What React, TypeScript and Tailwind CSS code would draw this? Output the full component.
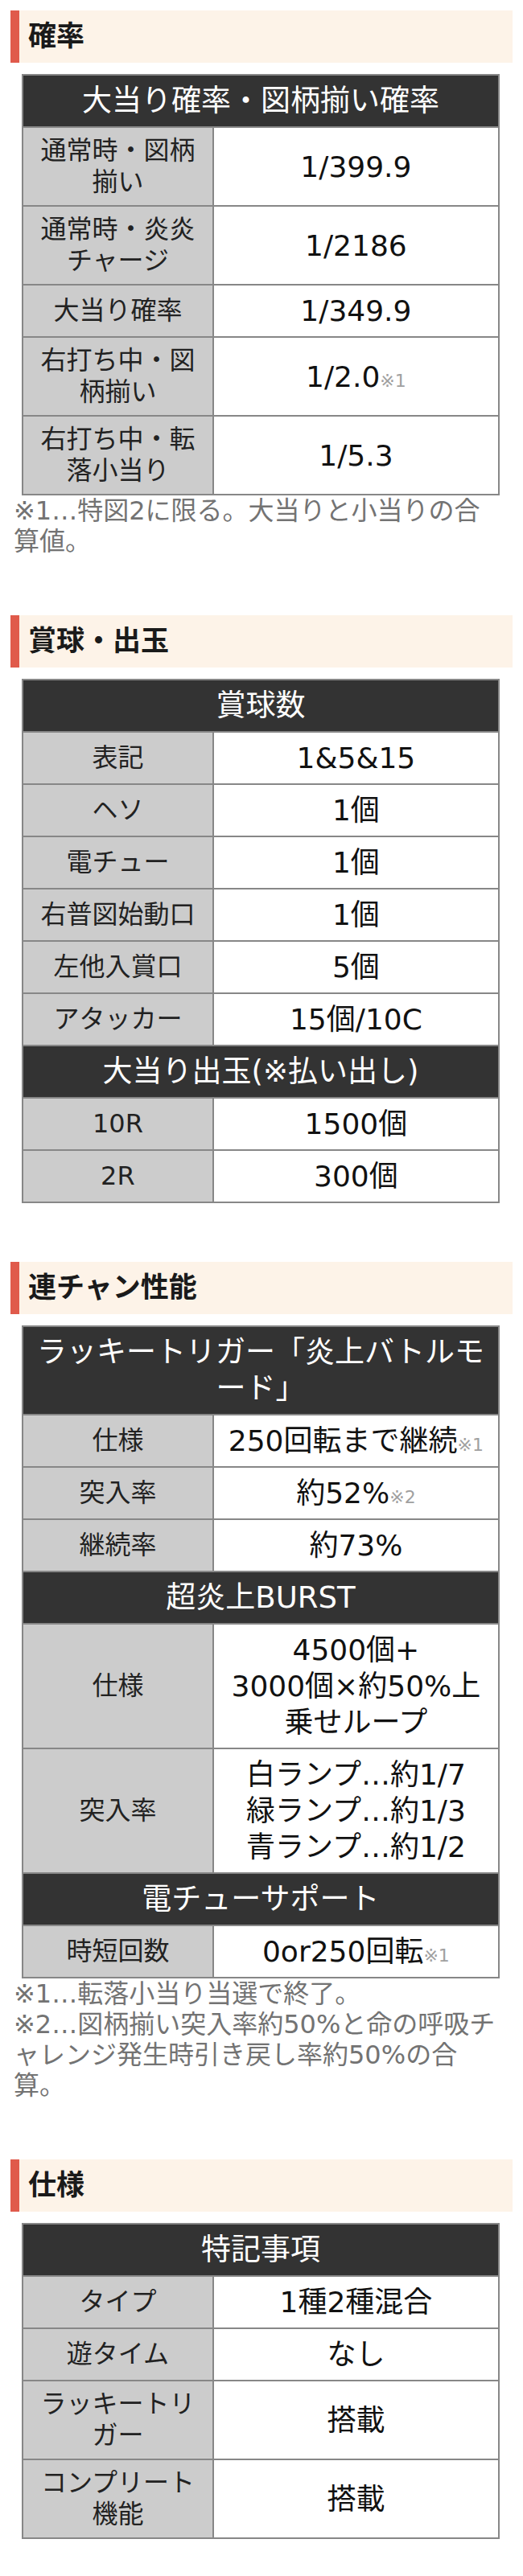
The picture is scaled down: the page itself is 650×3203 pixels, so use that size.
import type { ReactNode } from "react";

type Row =
    | { th: ReactNode }
    | { label: ReactNode; value: ReactNode };

type Section = {
    title: string;
    rows: Row[];
    notes?: ReactNode;
};

function Mark({ n }: { n: string }) {
    return <span className="text-[22px] leading-none text-[#a0a0a0]">※{n}</span>;
}

const sections: Section[] = [
    {
        title: "確率",
        rows: [
            { th: "大当り確率・図柄揃い確率" },
            { label: "通常時・図柄揃い", value: "1/399.9" },
            { label: "通常時・炎炎チャージ", value: "1/2186" },
            { label: "大当り確率", value: "1/349.9" },
            { label: "右打ち中・図柄揃い", value: <>1/2.0<Mark n="1" /></> },
            { label: "右打ち中・転落小当り", value: "1/5.3" },
        ],
        notes: (
            <>
                ※1…特図2に限る。大当りと小当りの合<br />
                算値。
            </>
        ),
    },
    {
        title: "賞球・出玉",
        rows: [
            { th: "賞球数" },
            { label: "表記", value: "1&5&15" },
            { label: "ヘソ", value: "1個" },
            { label: "電チュー", value: "1個" },
            { label: "右普図始動口", value: "1個" },
            { label: "左他入賞口", value: "5個" },
            { label: "アタッカー", value: "15個/10C" },
            { th: "大当り出玉(※払い出し)" },
            { label: "10R", value: "1500個" },
            { label: "2R", value: "300個" },
        ],
    },
    {
        title: "連チャン性能",
        rows: [
            { th: <>ラッキートリガー「炎上バトルモ<br />ード」</> },
            { label: "仕様", value: <>250回転まで継続<Mark n="1" /></> },
            { label: "突入率", value: <>約52%<Mark n="2" /></> },
            { label: "継続率", value: "約73%" },
            { th: "超炎上BURST" },
            {
                label: "仕様",
                value: (
                    <>
                        4500個+<br />
                        3000個×約50%上<br />
                        乗せループ
                    </>
                ),
            },
            {
                label: "突入率",
                value: (
                    <>
                        白ランプ…約1/7<br />
                        緑ランプ…約1/3<br />
                        青ランプ…約1/2
                    </>
                ),
            },
            { th: "電チューサポート" },
            { label: "時短回数", value: <>0or250回転<Mark n="1" /></> },
        ],
        notes: (
            <>
                ※1…転落小当り当選で終了。<br />
                ※2…図柄揃い突入率約50%と命の呼吸チ<br />
                ャレンジ発生時引き戻し率約50%の合<br />
                算。
            </>
        ),
    },
    {
        title: "仕様",
        rows: [
            { th: "特記事項" },
            { label: "タイプ", value: "1種2種混合" },
            { label: "遊タイム", value: "なし" },
            { label: "ラッキートリガー", value: "搭載" },
            { label: "コンプリート機能", value: "搭載" },
        ],
    },
];

function SpecTable({ rows }: { rows: Row[] }) {
    return (
        <table className="w-full table-fixed border-collapse border-2 border-[#878787]">
            <colgroup>
                <col className="w-[40%]" />
                <col />
            </colgroup>
            <tbody>
                {rows.map((row, i) =>
                    "th" in row ? (
                        <tr key={i}>
                            <th
                                colSpan={2}
                                className="border-2 border-[#878787] bg-[#333333] px-[10px] py-[9px] text-center text-[37px] font-normal leading-[45px] text-white"
                            >
                                {row.th}
                            </th>
                        </tr>
                    ) : (
                        <tr key={i}>
                            <td className="border-2 border-[#878787] bg-[#cccccc] px-3 py-[9px] text-center align-middle text-[32px] leading-[39px] text-[#222]">
                                {row.label}
                            </td>
                            <td className="border-2 border-[#878787] bg-white px-[8px] py-[9px] text-center align-middle text-[36px] leading-[45px] text-[#111]">
                                {row.value}
                            </td>
                        </tr>
                    )
                )}
            </tbody>
        </table>
    );
}

export default function App() {
    return (
        <div className="w-[650px] bg-white pt-[13px] pb-[41px] font-['DejaVu_Sans','Noto_Sans_CJK_JP',sans-serif]">
            {sections.map((s, i) => (
                <section key={s.title} className={i < sections.length - 1 ? "mb-[73px]" : ""}>
                    <div className="mx-[13px] flex h-[65px] items-center border-l-[11px] border-[#e05a4b] bg-[#fdf3e8] pl-[11px]">
                        <h2 className="text-[35px] font-bold leading-none text-[#1a1a1a]">{s.title}</h2>
                    </div>
                    <div className="ml-[27px] mr-[29px] mt-[14px]">
                        <SpecTable rows={s.rows} />
                    </div>
                    {s.notes && (
                        <p className="whitespace-nowrap pl-[17px] text-[32px] leading-[38px] text-[#737373]">{s.notes}</p>
                    )}
                </section>
            ))}
        </div>
    );
}
